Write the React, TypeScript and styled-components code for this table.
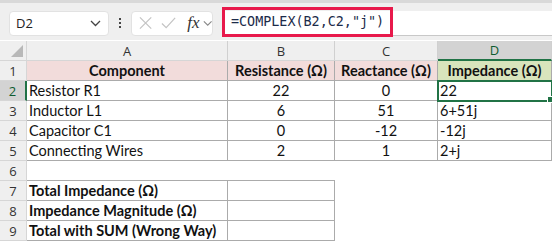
import React from "react";
import styled, { createGlobalStyle, css } from "styled-components";

const GlobalStyle = createGlobalStyle`
  body {
    margin: 0;
    background: #ffffff;
    font-family: "Lato", "Liberation Sans", sans-serif;
  }
`;

const COLS = ["A", "B", "C", "D"];

type Edge = "full" | "bottom" | "none";
type Align = "left" | "center";

interface RowData {
  cells: { text: string; align?: Align; bold?: boolean; fill?: string; edge?: Edge }[];
}

const rows: RowData[] = [
  {
    cells: [
      { text: "Component", align: "center", bold: true, fill: "#f2dcdb" },
      { text: "Resistance (Ω)", align: "center", bold: true, fill: "#f2dcdb" },
      { text: "Reactance (Ω)", align: "center", bold: true, fill: "#f2dcdb" },
      { text: "Impedance (Ω)", align: "center", bold: true, fill: "#d8e4bc" },
    ],
  },
  {
    cells: [
      { text: "Resistor R1" },
      { text: "22", align: "center" },
      { text: "0", align: "center" },
      { text: "22" },
    ],
  },
  {
    cells: [
      { text: "Inductor L1" },
      { text: "6", align: "center" },
      { text: "51", align: "center" },
      { text: "6+51j" },
    ],
  },
  {
    cells: [
      { text: "Capacitor C1" },
      { text: "0", align: "center" },
      { text: "-12", align: "center" },
      { text: "-12j" },
    ],
  },
  {
    cells: [
      { text: "Connecting Wires" },
      { text: "2", align: "center" },
      { text: "1", align: "center" },
      { text: "2+j" },
    ],
  },
  {
    cells: [
      { text: "", edge: "bottom" },
      { text: "", edge: "bottom" },
      { text: "", edge: "none" },
      { text: "", edge: "none" },
    ],
  },
  {
    cells: [
      { text: "Total Impedance (Ω)", bold: true },
      { text: "" },
      { text: "", edge: "none" },
      { text: "", edge: "none" },
    ],
  },
  {
    cells: [
      { text: "Impedance Magnitude (Ω)", bold: true },
      { text: "" },
      { text: "", edge: "none" },
      { text: "", edge: "none" },
    ],
  },
  {
    cells: [
      { text: "Total with SUM (Wrong Way)", bold: true },
      { text: "" },
      { text: "", edge: "none" },
      { text: "", edge: "none" },
    ],
  },
];

export default function App() {
  return (
    <Page>
      <GlobalStyle />
      <FormulaBar>
        <NameBox>
          <span>D2</span>
          <Chevron />
        </NameBox>
        <Dots>
          <i />
          <i />
          <i />
        </Dots>
        <FnBox>
          <svg width="14" height="14" viewBox="0 0 14 14">
            <path d="M1 1 L13 13 M13 1 L1 13" stroke="#c4c4c4" strokeWidth="1.3" fill="none" />
          </svg>
          <svg width="16" height="14" viewBox="0 0 16 14">
            <path d="M1 7.5 L5.5 12 L15 1.5" stroke="#c4c4c4" strokeWidth="1.3" fill="none" />
          </svg>
          <Fx>fx</Fx>
          <Chevron small />
        </FnBox>
        <FormulaInput>
          <Formula>=COMPLEX(B2,C2,"j")</Formula>
        </FormulaInput>
      </FormulaBar>
      <Sheet>
        <Corner>
          <svg width="12" height="12" viewBox="0 0 12 12">
            <path d="M12 0 L12 12 L0 12 Z" fill="#b8b8b8" />
          </svg>
        </Corner>
        {COLS.map((c) => (
          <ColHeader key={c} active={c === "D"}>
            {c}
          </ColHeader>
        ))}
        {rows.map((row, ri) => (
          <React.Fragment key={ri}>
            <RowHeader active={ri === 1}>{ri + 1}</RowHeader>
            {row.cells.map((cell, ci) => (
              <Cell
                key={ci}
                align={cell.align ?? "left"}
                bold={cell.bold}
                fill={cell.fill}
                edge={cell.edge ?? "full"}
                selected={ri === 1 && ci === 3}
              >
                {cell.text}
                {ri === 1 && ci === 3 && <FillHandle />}
              </Cell>
            ))}
          </React.Fragment>
        ))}
      </Sheet>
    </Page>
  );
}

const Chevron = ({ small }: { small?: boolean }) => (
  <svg width={small ? 10 : 11} height="7" viewBox="0 0 11 7">
    <path d="M1 1 L5.5 5.5 L10 1" stroke={small ? "#888" : "#444"} strokeWidth="1.3" fill="none" />
  </svg>
);

const Page = styled.div`
  width: 552px;
  height: 242px;
  overflow: hidden;
  background: #fff;
`;

const FormulaBar = styled.div`
  height: 37px;
  background: #efefef;
  border-top: 3px solid #d9d9d9;
  display: flex;
  align-items: center;
  padding-left: 9px;
`;

const NameBox = styled.div`
  width: 100px;
  height: 25px;
  box-sizing: border-box;
  margin-top: 3px;
  background: #fff;
  border: 1px solid #e2e2e2;
  border-radius: 4px;
  display: flex;
  align-items: center;
  justify-content: space-between;
  padding: 0 7px 0 6px;
  font-family: "Open Sans", "Noto Sans", sans-serif;
  font-size: 13px;
  color: #222;
`;

const Dots = styled.div`
  width: 22px;
  display: flex;
  flex-direction: column;
  align-items: center;
  gap: 2px;
  margin-top: 3px;

  i {
    width: 2px;
    height: 2px;
    background: #444;
  }
`;

const FnBox = styled.div`
  width: 82px;
  height: 25px;
  box-sizing: border-box;
  margin-top: 3px;
  background: #fff;
  border: 1px solid #e2e2e2;
  border-radius: 4px;
  display: flex;
  align-items: center;
  gap: 9px;
  padding-left: 7px;
`;

const Fx = styled.span`
  font-family: "Liberation Serif", serif;
  font-style: italic;
  font-size: 17px;
  color: #333;
  margin-left: 2px;
  margin-right: -6px;
`;

const FormulaInput = styled.div`
  flex: 1;
  height: 24px;
  margin-left: 9px;
  margin-top: 4px;
  background: #fff;
  border-bottom: 1px solid #c8c8c8;
  display: flex;
  align-items: center;
`;

const Formula = styled.div`
  height: 30px;
  width: 171px;
  box-sizing: border-box;
  margin-top: -3px;
  border: 3px solid #e8194b;
  display: flex;
  align-items: center;
  padding-left: 6px;
  font-family: "DejaVu Sans Mono", "Liberation Mono", monospace;
  font-size: 13.4px;
  color: #1c2b4a;
`;

const Sheet = styled.div`
  display: grid;
  grid-template-columns: 27px 201px 107px 103px 114px;
  grid-auto-rows: 20px;
  margin-top: 1px;
`;

const Corner = styled.div`
  background: #efefef;
  border-right: 1px solid #d6d6d6;
  border-bottom: 1px solid #d6d6d6;
  display: flex;
  align-items: flex-end;
  justify-content: flex-end;
  padding: 0 3px 3px 0;
  box-sizing: border-box;
`;

const ColHeader = styled.div<{ active?: boolean }>`
  box-sizing: border-box;
  background: ${(p) => (p.active ? "#d3d3d3" : "#efefef")};
  border-right: 1px solid #d0d0d0;
  border-bottom: ${(p) => (p.active ? "2px solid #217346" : "1px solid #d6d6d6")};
  color: ${(p) => (p.active ? "#0f5c30" : "#333")};
  font-family: "Open Sans", "Noto Sans", sans-serif;
  font-size: 13px;
  display: flex;
  align-items: center;
  justify-content: center;
`;

const RowHeader = styled.div<{ active?: boolean }>`
  box-sizing: border-box;
  background: ${(p) => (p.active ? "#d3d3d3" : "#efefef")};
  border-right: ${(p) => (p.active ? "2px solid #217346" : "1px solid #d6d6d6")};
  border-bottom: 1px solid #d6d6d6;
  color: ${(p) => (p.active ? "#0f5c30" : "#333")};
  font-family: "Open Sans", "Noto Sans", sans-serif;
  font-size: 13px;
  display: flex;
  align-items: center;
  justify-content: center;
`;

const Cell = styled.div<{
  align: Align;
  bold?: boolean;
  fill?: string;
  edge: Edge;
  selected?: boolean;
}>`
  position: relative;
  box-sizing: border-box;
  background: ${(p) => p.fill ?? "#fff"};
  font-size: 14.5px;
  font-weight: ${(p) => (p.bold ? 700 : 400)};
  color: #111;
  white-space: nowrap;
  display: flex;
  align-items: center;
  justify-content: ${(p) => (p.align === "center" ? "center" : "flex-start")};
  padding-left: ${(p) => (p.align === "center" ? 0 : 2)}px;
  ${(p) =>
    p.edge === "full" &&
    css`
      border-right: 1px solid #ababab;
      border-bottom: 1px solid #ababab;
    `}
  ${(p) =>
    p.edge === "bottom" &&
    css`
      border-bottom: 1px solid #ababab;
    `}
  ${(p) =>
    p.selected &&
    css`
      outline: 2px solid #217346;
      outline-offset: -1px;
      z-index: 1;
    `}
`;

const FillHandle = styled.span`
  position: absolute;
  right: -3px;
  bottom: -3px;
  width: 5px;
  height: 5px;
  background: #217346;
  border: 1px solid #fff;
`;
